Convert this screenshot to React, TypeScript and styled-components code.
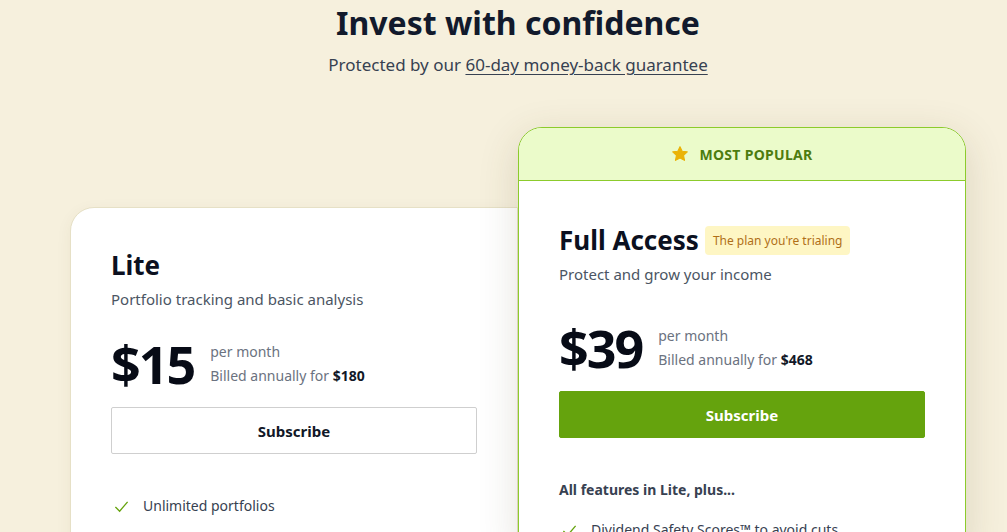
import React from "react";
import styled, { createGlobalStyle } from "styled-components";

const Global = createGlobalStyle`
  html, body { margin: 0; padding: 0; }
  body {
    background: #f6f0dd;
    font-family: "Noto Sans", "Open Sans", sans-serif;
    color: #111827;
    overflow: hidden;
  }
`;

const Page = styled.main`
  width: 896px;
  margin-left: 70px;
  display: flex;
  flex-direction: column;
`;

const Header = styled.header`
  display: flex;
  flex-direction: column;
  align-items: center;
  padding-top: 1px;
`;

const Title = styled.h1`
  margin: 0;
  font-size: 32px;
  line-height: 44px;
  font-weight: 700;
  color: #121a2c;
`;

const Subtitle = styled.p`
  margin: 8px 0 0;
  font-size: 17px;
  line-height: 24px;
  color: #374151;
  a {
    color: #374151;
    text-decoration: underline;
    text-underline-offset: 3px;
  }
`;

const Plans = styled.section`
  display: flex;
  align-items: flex-start;
  margin-top: 50px;
`;

const Card = styled.div<{ $featured?: boolean }>`
  flex: 0 0 448px;
  box-sizing: border-box;
  background: #fff;
  border-radius: ${(p) => (p.$featured ? "24px 24px 0 0" : "24px 0 0 0")};
  border: 1px solid ${(p) => (p.$featured ? "#8ccb2c" : "#e6e0c6")};
  margin-top: ${(p) => (p.$featured ? "0" : "80px")};
  height: ${(p) => (p.$featured ? "420px" : "340px")};
  overflow: hidden;
  position: relative;
  z-index: ${(p) => (p.$featured ? 2 : 1)};
  box-shadow: ${(p) =>
    p.$featured
      ? "0 10px 40px rgba(80, 70, 30, 0.16)"
      : "0 4px 16px rgba(80, 70, 30, 0.06)"};
`;

const Ribbon = styled.div`
  display: flex;
  align-items: center;
  justify-content: center;
  gap: 10px;
  height: 52px;
  background: #ebfbca;
  border-bottom: 1px solid #8ccb2c;
  color: #4d7c0f;
  font-size: 14px;
  font-weight: 700;
  letter-spacing: 0.3px;
  text-transform: uppercase;
`;

const Body = styled.div<{ $top: number }>`
  padding: ${(p) => p.$top}px 40px 0;
  display: flex;
  flex-direction: column;
`;

const TitleRow = styled.div`
  display: flex;
  align-items: center;
  gap: 6px;
`;

const PlanName = styled.h2`
  margin: 0;
  font-size: 26px;
  line-height: 34px;
  font-weight: 700;
  color: #0b1020;
`;

const Badge = styled.span`
  background: #fef6c4;
  color: #b06f18;
  font-size: 12px;
  line-height: 19px;
  padding: 5px 8px;
  border-radius: 4px;
`;

const Desc = styled.p`
  margin: 6px 0 0;
  font-size: 15px;
  line-height: 22px;
  color: #4b5563;
`;

const PriceRow = styled.div<{ $gap: number }>`
  display: flex;
  align-items: flex-start;
  gap: 16px;
  margin-top: ${(p) => p.$gap}px;
`;

const Price = styled.div`
  font-size: 52px;
  line-height: 56px;
  font-weight: 700;
  letter-spacing: -2px;
  color: #070b16;
`;

const Billing = styled.div`
  display: flex;
  flex-direction: column;
  font-size: 14px;
  line-height: 24px;
  color: #6b7280;
  padding-top: 4px;
  b {
    color: #111827;
    font-weight: 700;
  }
`;

const Button = styled.button<{ $primary?: boolean }>`
  margin-top: 15px;
  height: 47px;
  width: 100%;
  border-radius: 2px;
  font-family: inherit;
  font-size: 15px;
  font-weight: 700;
  cursor: pointer;
  border: 1px solid ${(p) => (p.$primary ? "#65a30d" : "#cfcfcf")};
  background: ${(p) => (p.$primary ? "#65a30d" : "#fff")};
  color: ${(p) => (p.$primary ? "#fff" : "#111827")};
`;

const FeaturesLabel = styled.div`
  margin-top: 41px;
  font-size: 14px;
  line-height: 22px;
  font-weight: 700;
  color: #374151;
`;

const FeatureList = styled.ul<{ $gap: number }>`
  list-style: none;
  margin: ${(p) => p.$gap}px 0 0;
  padding: 0;
`;

const Feature = styled.li`
  display: flex;
  align-items: center;
  gap: 14px;
  font-size: 14px;
  line-height: 22px;
  color: #374151;
  padding-left: 3px;
`;

const Check = () => (
  <svg width="15" height="15" viewBox="0 0 16 16" fill="none">
    <path d="M1.5 8.5 L6 13 L14.5 3" stroke="#65a30d" strokeWidth="1.4" />
  </svg>
);

const Star = () => (
  <svg width="18" height="18" viewBox="0 0 24 24">
    <path
      d="M12 2.2l2.9 6.2 6.8.8-5 4.6 1.3 6.7L12 17.2l-6 3.3 1.3-6.7-5-4.6 6.8-.8z"
      fill="#eab308"
      stroke="#eab308"
      strokeWidth="1.5"
      strokeLinejoin="round"
    />
  </svg>
);

export default function App() {
  return (
    <>
      <Global />
      <Page>
        <Header>
          <Title>Invest with confidence</Title>
          <Subtitle>
            Protected by our <a href="#">60-day money-back guarantee</a>
          </Subtitle>
        </Header>
        <Plans>
          <Card>
            <Body $top={40}>
              <TitleRow>
                <PlanName>Lite</PlanName>
              </TitleRow>
              <Desc>Portfolio tracking and basic analysis</Desc>
              <PriceRow $gap={26}>
                <Price>$15</Price>
                <Billing>
                  <span>per month</span>
                  <span>
                    Billed annually for <b>$180</b>
                  </span>
                </Billing>
              </PriceRow>
              <Button>Subscribe</Button>
              <FeatureList $gap={41}>
                <Feature>
                  <Check />
                  Unlimited portfolios
                </Feature>
              </FeatureList>
            </Body>
          </Card>
          <Card $featured>
            <Ribbon>
              <Star />
              Most popular
            </Ribbon>
            <Body $top={42}>
              <TitleRow>
                <PlanName>Full Access</PlanName>
                <Badge>The plan you're trialing</Badge>
              </TitleRow>
              <Desc>Protect and grow your income</Desc>
              <PriceRow $gap={35}>
                <Price>$39</Price>
                <Billing>
                  <span>per month</span>
                  <span>
                    Billed annually for <b>$468</b>
                  </span>
                </Billing>
              </PriceRow>
              <Button $primary>Subscribe</Button>
              <FeaturesLabel>All features in Lite, plus...</FeaturesLabel>
              <FeatureList $gap={18}>
                <Feature>
                  <Check />
                  Dividend Safety Scores™ to avoid cuts
                </Feature>
              </FeatureList>
            </Body>
          </Card>
        </Plans>
      </Page>
    </>
  );
}
